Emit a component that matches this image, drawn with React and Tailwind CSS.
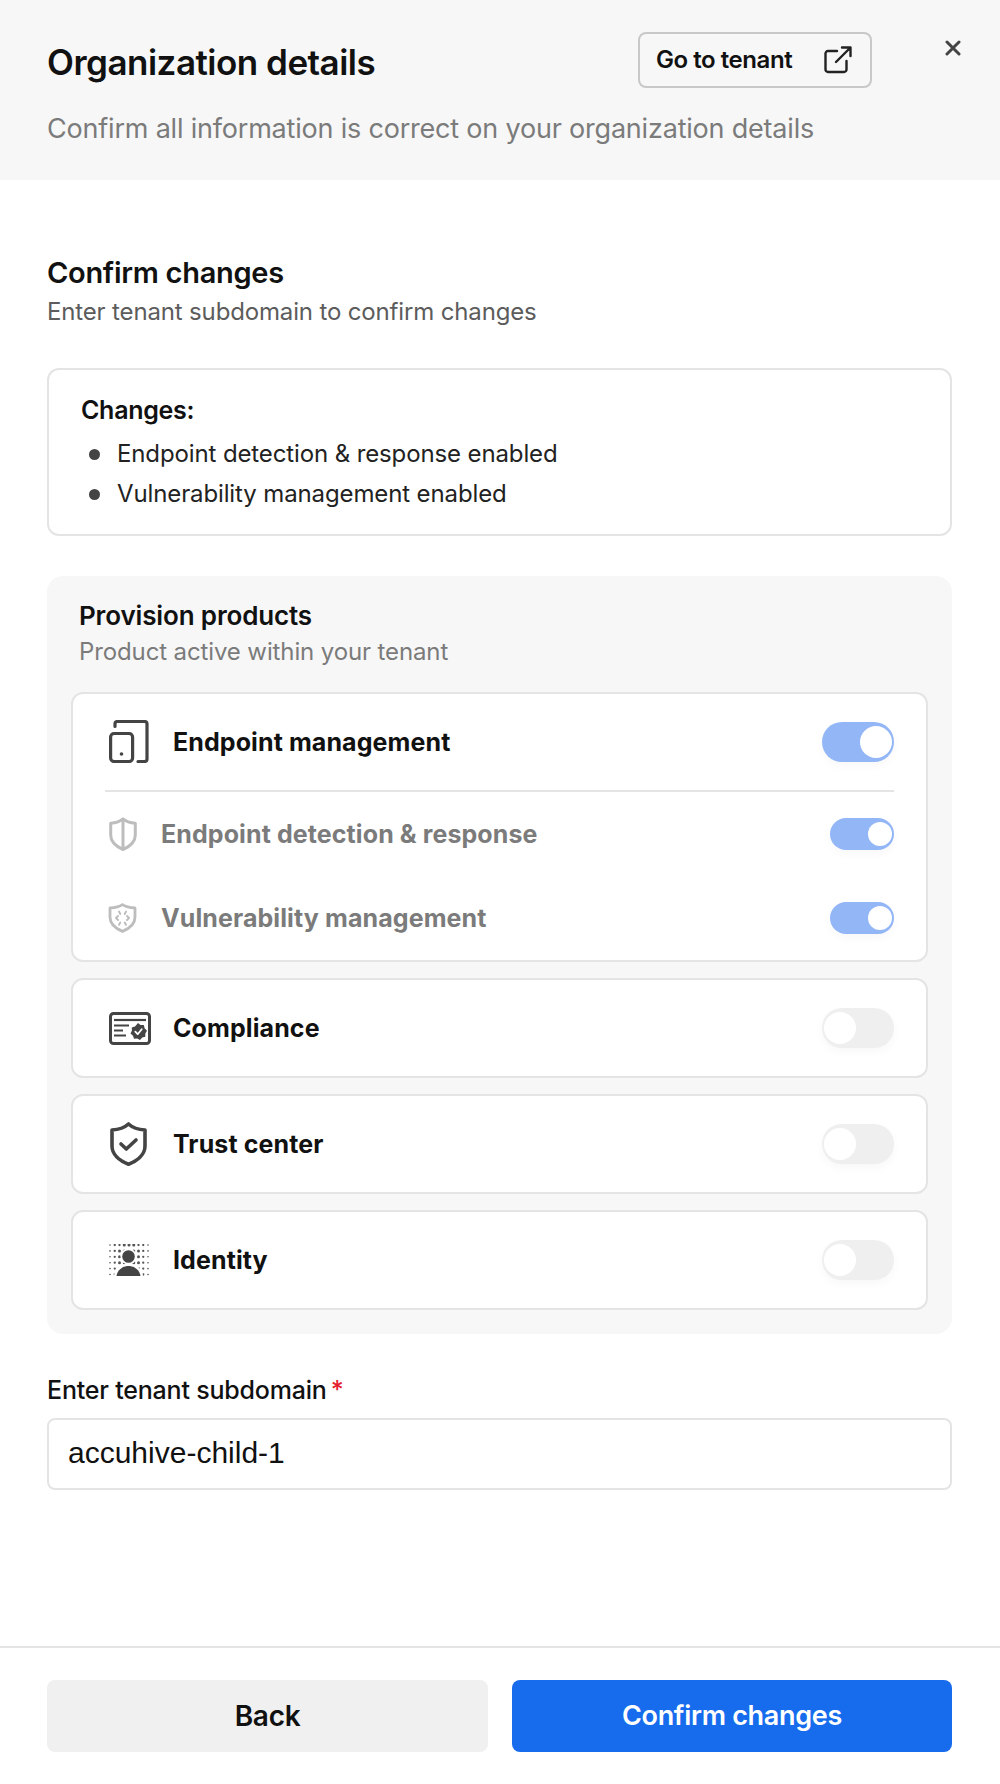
import React from 'react'

function EndpointIcon() {
  return (
    <svg width="40" height="43" viewBox="0 0 40 43" fill="none" stroke="#444" strokeWidth="3.2" strokeLinecap="round" className="shrink-0">
      <path d="M6 6.500V4a2.500 2.500 0 0 1 2.500-2.500H35.500A2.500 2.500 0 0 1 38 4V39a2.500 2.500 0 0 1-2.500 2.500H29" />
      <rect x="1.600" y="13.500" width="22" height="28" rx="3.500" />
      <circle cx="12.500" cy="34" r="1.800" fill="#444" stroke="none" />
    </svg>
  )
}

function SplitShieldIcon() {
  return (
    <svg width="28" height="34" viewBox="0 0 28 34" fill="none" stroke="#bdbdbd" strokeWidth="3" strokeLinejoin="round" className="shrink-0">
      <path d="M14 1.800C16.500 4 21 5.800 26.300 6.300V18C26.300 25 21 29.500 14 32.500 7 29.500 1.700 25 1.700 18V6.300C7 5.800 11.500 4 14 1.800Z" />
      <path d="M14 2V32" />
    </svg>
  )
}

function BugShieldIcon() {
  return (
    <svg width="29" height="30" viewBox="0 0 29 30" fill="none" stroke="#bdbdbd" strokeWidth="2.800" strokeLinejoin="round" className="shrink-0">
      <path d="M14.500 1.600C17 3.300 21.500 4.600 27 5V14C27 21 21.500 25.500 14.500 28.400 7.500 25.500 2 21 2 14V5C7.500 4.600 12 3.300 14.500 1.600Z" />
      <path d="M11 8.500 12.300 11M18 8.500 16.700 11M10 13 8 15 10 17M19 13 21 15 19 17M12.300 19.500 11 21.800M16.700 19.500 18 21.800" strokeWidth="1.900" strokeLinecap="round" />
    </svg>
  )
}

function ComplianceIcon() {
  return (
    <svg width="42" height="33" viewBox="0 0 42 33" fill="none" className="shrink-0">
      <rect x="1.500" y="1.500" width="39" height="30" rx="3" stroke="#444" strokeWidth="3" />
      <path d="M5 8H37" stroke="#444" strokeWidth="2.200" />
      <path d="M5 13.500H20M5 18.500H14M5 23.500H17" stroke="#444" strokeWidth="2.200" />
      <path d="M29 11 31.500 13 34.800 13.100 35.600 16.300 38 18.700 36.300 21.500 36.300 24.800 33.200 25.600 31 28 28.200 26.500 25 26.800 24 23.800 21.500 21.600 22.900 18.700 22.800 15.400 26 14.400Z" fill="#444" />
      <path d="M26.300 19.700 28.700 22.200 32.700 17.300" stroke="#fff" strokeWidth="1.800" strokeLinecap="round" strokeLinejoin="round" />
    </svg>
  )
}

function TrustIcon() {
  return (
    <svg width="37" height="44" viewBox="0 0 37 44" fill="none" stroke="#444" strokeLinejoin="round" className="shrink-0 ml-[1px]">
      <path d="M18.500 2C22 5.200 27.500 7.600 35 8V24C35 32.500 27.500 38.800 18.500 42.200 9.500 38.800 2 32.500 2 24V8C9.500 7.600 15 5.200 18.500 2Z" strokeWidth="3.600" />
      <path d="M11 22 16.300 27 26 18" strokeWidth="3.600" strokeLinecap="round" />
    </svg>
  )
}

const identityDots = [0, 1, 2, 3, 4, 5, 6, 7, 8].flatMap((col) =>
  [0, 1, 2, 3, 4, 5].map((row) => {
    const dx = col - 4
    const dy = row - 2.5
    const dist = Math.sqrt(dx * dx + dy * dy)
    return { x: 1 + col * 4.75, y: 1 + row * 5.9, r: dist < 3 ? 1.5 : dist < 4 ? 1.15 : 0.8, key: `${col}-${row}` }
  })
)

function IdentityIcon() {
  return (
    <svg width="40" height="32" viewBox="0 0 40 32" className="shrink-0">
      {identityDots.map((d) => (
        <circle key={d.key} cx={d.x} cy={d.y} r={d.r} fill="#555" />
      ))}
      <circle cx="19.500" cy="12.500" r="8" fill="#fff" />
      <path d="M5 32C6 24 12 20 19.500 20S33 24 34 32Z" fill="#fff" />
      <circle cx="19.500" cy="12.500" r="6.300" fill="#444" />
      <path d="M7.500 32C8.500 25.500 14 22 19.500 22S30.500 25.500 31.500 32Z" fill="#444" />
    </svg>
  )
}

function Toggle({ on, small }) {
  const size = small ? 'w-16 h-8' : 'w-[72px] h-10'
  const knob = small ? 'w-6 h-6' : 'w-8 h-8'
  return (
    <div className={`${size} px-[2px] py-1 shrink-0 flex rounded-full shadow-[0_4px_10px_rgba(0,0,0,0.03)] ${on ? 'bg-[#93b6f7] justify-end' : 'bg-[#efefef] justify-start'}`}>
      <div className={`${knob} rounded-full bg-white`} />
    </div>
  )
}

function SubRow({ icon, label }) {
  return (
    <div className="flex items-center">
      <div className="w-[33px] flex justify-center ml-[1px] mr-[22px]">{icon}</div>
      <span className="flex-1 text-[25px] leading-[32px] font-bold text-[#7b7b7b] tracking-[0.1px]">{label}</span>
      <Toggle on small />
    </div>
  )
}

function ProductCard({ icon, label }) {
  return (
    <div className="h-[100px] rounded-xl border-2 border-[#e4e4e4] bg-white pl-[36px] pr-[32px] flex items-center">
      <div className="w-[64px] shrink-0 flex items-center">{icon}</div>
      <span className="flex-1 text-[25px] leading-[32px] font-bold text-[#111] tracking-[0.1px]">{label}</span>
      <Toggle />
    </div>
  )
}

export default function App() {
  return (
    <div className="w-[1000px] h-[1784px] bg-white flex flex-col font-['Inter',sans-serif] text-[#111]">
      <header className="h-[180px] shrink-0 bg-[#f7f7f7] pl-[47px] pr-[33px] pt-[32px] relative">
        <div className="flex items-start">
          <h1 className="text-[35px] leading-[55px] font-semibold tracking-[-0.5px] text-[#111] mt-[3px]">Organization details</h1>
          <button className="ml-auto mr-[95px] w-[234px] h-[56px] rounded-lg border-2 border-[#c8c8c8] flex items-center justify-between pl-[16px] pr-[18px]">
            <span className="text-[24px] font-semibold tracking-[-0.45px] text-[#111]">Go to tenant</span>
            <svg width="28" height="28" viewBox="0 0 28 28" fill="none" stroke="#222" strokeWidth="2.400" strokeLinecap="round" strokeLinejoin="round">
              <path d="M13 5H4a2.500 2.500 0 0 0-2.500 2.500V23.500A2.500 2.500 0 0 0 4 26H20a2.500 2.500 0 0 0 2.500-2.500V15" />
              <path d="M12 16 26.500 1.500M18 1.500H26.500V10" />
            </svg>
          </button>
        </div>
        <p className="mt-[21px] text-[27px] leading-[36px] text-[#7b7b7b] tracking-[-0.2px]">Confirm all information is correct on your organization details</p>
        <svg className="absolute top-[40px] right-[39px]" width="16" height="16" viewBox="0 0 16 16" fill="none" stroke="#444" strokeWidth="3" strokeLinecap="round">
          <path d="M2 2 14 14M14 2 2 14" />
        </svg>
      </header>

      <main className="pl-[47px] pr-[48px] pt-[75px]">
        <h2 className="text-[29px] leading-[36px] font-semibold tracking-[-0.3px]">Confirm changes</h2>
        <p className="mt-[3px] text-[24px] leading-[36px] text-[#5c5c5c] tracking-[-0.15px]">Enter tenant subdomain to confirm changes</p>

        <section className="mt-[38px] h-[168px] rounded-xl border-2 border-[#e4e4e4] pl-[32px] pt-[24px]">
          <h3 className="text-[25px] leading-[32px] font-semibold tracking-[-0.3px]">Changes:</h3>
          <ul className="mt-[12px] flex flex-col gap-[8px]">
            {['Endpoint detection & response enabled', 'Vulnerability management enabled'].map((t) => (
              <li key={t} className="flex items-center text-[24px] leading-[32px] text-[#222] tracking-[-0.12px]">
                <span className="w-[11px] h-[11px] rounded-full bg-[#444] ml-[8px] mr-[17px]" />
                {t}
              </li>
            ))}
          </ul>
        </section>

        <section className="mt-[40px] h-[758px] rounded-2xl bg-[#f7f7f7] px-[24px] pt-[24px]">
          <h3 className="ml-[8px] text-[26px] leading-[32px] font-semibold tracking-[-0.15px]">Provision products</h3>
          <p className="ml-[8px] mt-[4px] text-[24px] leading-[32px] text-[#7b7b7b] tracking-[-0.12px]">Product active within your tenant</p>

          <div className="mt-[24px] flex flex-col gap-[16px]">
            <div className="h-[270px] rounded-xl border-2 border-[#e4e4e4] bg-white px-[32px] pt-[26px]">
              <div className="flex items-center pb-[27px] border-b-2 border-[#e4e4e4]">
                <div className="pl-[4px] w-[68px] shrink-0"><EndpointIcon /></div>
                <span className="flex-1 text-[25px] leading-[32px] font-bold tracking-[0.1px]">Endpoint management</span>
                <Toggle on />
              </div>
              <div className="mt-[25px] flex flex-col gap-[51px]">
                <SubRow icon={<SplitShieldIcon />} label="Endpoint detection & response" />
                <SubRow icon={<BugShieldIcon />} label="Vulnerability management" />
              </div>
            </div>
            <ProductCard icon={<ComplianceIcon />} label="Compliance" />
            <ProductCard icon={<TrustIcon />} label="Trust center" />
            <ProductCard icon={<IdentityIcon />} label="Identity" />
          </div>
        </section>

        <label className="block mt-[40px] text-[25px] leading-[32px] font-medium tracking-[-0.2px]">
          Enter tenant subdomain<span className="ml-[4px] text-[#e5202e]">*</span>
        </label>
        <div className="mt-[12px] h-[72px] rounded-lg border-2 border-[#e4e4e4] flex items-center pl-[19px]">
          <span className="text-[30px] leading-[36px] -mt-[2px] font-['Liberation_Sans',sans-serif] text-[#111]">accuhive-child-1</span>
        </div>
      </main>

      <footer className="mt-auto border-t-2 border-[#e4e4e4] pl-[47px] pr-[48px] pt-[32px] pb-[32px] flex gap-[24px]">
        <button className="w-[441px] h-[72px] rounded-lg bg-[#f0f0f0] text-[28px] font-semibold tracking-[-0.3px] text-[#111]">Back</button>
        <button className="flex-1 h-[72px] rounded-lg bg-[#166ced] text-[27px] font-semibold tracking-[-0.3px] text-white">Confirm changes</button>
      </footer>
    </div>
  )
}
